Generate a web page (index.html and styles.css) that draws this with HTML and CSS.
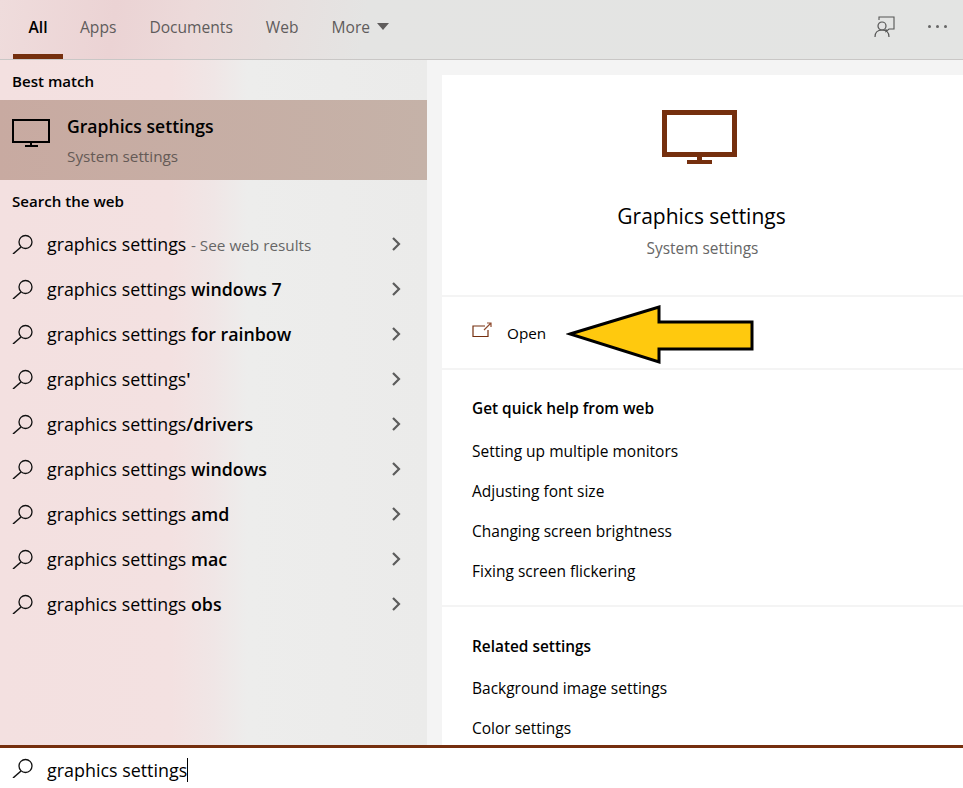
FILE: index.html
```html
<!DOCTYPE html>
<html lang="en">
<head>
    <meta charset="UTF-8">
    <title>Graphics settings</title>
    <link rel="stylesheet" href="styles.css">
</head>
<body>
    <svg class="svg-defs" width="0" height="0">
        <symbol id="icon-search" viewBox="0 0 22 20">
            <circle cx="13.5" cy="8" r="6.5" fill="none" stroke="currentColor" stroke-width="1.3"/>
            <path d="M9 13 L1 20" fill="none" stroke="currentColor" stroke-width="1.5"/>
        </symbol>
        <symbol id="icon-chevron" viewBox="0 0 10 14">
            <path d="M2 1 L8 7 L2 13" fill="none" stroke="currentColor" stroke-width="2.2"/>
        </symbol>
    </svg>

    <div class="app">
        <header class="top-bar">
            <nav class="tabs">
                <span class="tab active">All</span>
                <span class="tab">Apps</span>
                <span class="tab">Documents</span>
                <span class="tab">Web</span>
                <span class="tab">More <i class="caret"></i></span>
            </nav>
            <div class="top-actions">
                <svg class="feedback-icon" width="21" height="22" viewBox="0 0 21 22">
                    <path d="M5 4 V1 H20 V13 H15 L12 15.5 V13" fill="none" stroke="#555" stroke-width="1.1"/>
                    <circle cx="8" cy="10" r="4" fill="#e3e3e3" stroke="#555" stroke-width="1.2"/>
                    <path d="M1 21 C1 16 4 14 8 14 C12 14 15 16 15 21" fill="none" stroke="#555" stroke-width="1.2"/>
                </svg>
                <span class="dots"><i></i><i></i><i></i></span>
            </div>
        </header>

        <main class="content">
            <aside class="results">
                <h3 class="group-title">Best match</h3>
                <div class="best-match">
                    <svg class="best-icon" width="38" height="28" viewBox="0 0 38 28">
                        <path d="M1 1 H37 V23 H1 Z" fill="none" stroke="#000" stroke-width="2"/>
                        <path d="M19 24 V27 M13 27 H26" fill="none" stroke="#000" stroke-width="2"/>
                    </svg>
                    <div>
                        <div class="best-name">Graphics settings</div>
                        <div class="best-type">System settings</div>
                    </div>
                </div>
                <h3 class="group-title">Search the web</h3>
                <ul class="web-list">
                    <li><svg class="search-icon"><use href="#icon-search"/></svg><span class="query">graphics settings <small>- See web results</small></span><svg class="chevron"><use href="#icon-chevron"/></svg></li>
                    <li><svg class="search-icon"><use href="#icon-search"/></svg><span class="query">graphics settings <b>windows 7</b></span><svg class="chevron"><use href="#icon-chevron"/></svg></li>
                    <li><svg class="search-icon"><use href="#icon-search"/></svg><span class="query">graphics settings <b>for rainbow</b></span><svg class="chevron"><use href="#icon-chevron"/></svg></li>
                    <li><svg class="search-icon"><use href="#icon-search"/></svg><span class="query">graphics settings<b>'</b></span><svg class="chevron"><use href="#icon-chevron"/></svg></li>
                    <li><svg class="search-icon"><use href="#icon-search"/></svg><span class="query">graphics settings<b>/drivers</b></span><svg class="chevron"><use href="#icon-chevron"/></svg></li>
                    <li><svg class="search-icon"><use href="#icon-search"/></svg><span class="query">graphics settings <b>windows</b></span><svg class="chevron"><use href="#icon-chevron"/></svg></li>
                    <li><svg class="search-icon"><use href="#icon-search"/></svg><span class="query">graphics settings <b>amd</b></span><svg class="chevron"><use href="#icon-chevron"/></svg></li>
                    <li><svg class="search-icon"><use href="#icon-search"/></svg><span class="query">graphics settings <b>mac</b></span><svg class="chevron"><use href="#icon-chevron"/></svg></li>
                    <li><svg class="search-icon"><use href="#icon-search"/></svg><span class="query">graphics settings <b>obs</b></span><svg class="chevron"><use href="#icon-chevron"/></svg></li>
                </ul>
            </aside>

            <section class="details">
                <div class="card hero">
                    <svg class="hero-icon" width="75" height="54" viewBox="0 0 75 54">
                        <path d="M2.5 2.5 H72.5 V44.5 H2.5 Z" fill="none" stroke="#752f0e" stroke-width="5"/>
                        <path d="M35 47 H40 V50 H50 V54 H25 V50 H35 Z" fill="#752f0e"/>
                    </svg>
                    <div class="hero-name">Graphics settings</div>
                    <div class="hero-type">System settings</div>
                </div>
                <div class="card open-row">
                    <svg class="open-icon" width="20" height="16" viewBox="0 0 20 16">
                        <path d="M13 4 H1 V14.5 H16 V8" fill="none" stroke="#752f0e" stroke-width="1.2"/>
                        <path d="M12 8 L19 1 M15 1 H19 V5" fill="none" stroke="#8f4c30" stroke-width="1.2"/>
                    </svg>
                    <span>Open</span>
                </div>
                <div class="card links">
                    <h4>Get quick help from web</h4>
                    <a>Setting up multiple monitors</a>
                    <a>Adjusting font size</a>
                    <a>Changing screen brightness</a>
                    <a>Fixing screen flickering</a>
                </div>
                <div class="card links related">
                    <h4>Related settings</h4>
                    <a>Background image settings</a>
                    <a>Color settings</a>
                </div>
            </section>
        </main>

        <footer class="search-bar">
            <svg class="search-icon"><use href="#icon-search"/></svg>
            <span class="search-text">graphics settings</span>
        </footer>

        <!-- yellow arrow drawn on top of the screenshot -->
        <svg class="arrow" width="188" height="60" viewBox="0 0 188 60">
            <path d="M4 29 L93 2 V17 H186 V44 H93 V57 Z" fill="#ffc90e" stroke="#000" stroke-width="3"/>
        </svg>
    </div>
</body>
</html>
```

FILE: styles.css
```css
* {
    box-sizing: border-box;
}
body {
    margin: 0;
    font-family: "Open Sans", "Noto Sans", sans-serif;
    color: #000;
    background-color: #fff;
}
.svg-defs {
    display: block;
    height: 0;
}
.app {
    position: relative;
    width: 963px;
    height: 788px;
    overflow: hidden;
    display: flex;
    flex-direction: column;
}

/* top tabs */
.top-bar {
    flex: 0 0 60px;
    display: flex;
    justify-content: space-between;
    border-bottom: 1px solid #c9c7c6;
    background: linear-gradient(98deg, #efdcdc 0%, #ebd3d4 12%, #ecdada 20%, #e8dfde 28%, #e4e4e3 38%, #e3e4e3 100%);
}
.tabs {
    display: flex;
    padding-left: 13px;
}
.tab {
    height: 59px;
    padding: 17px 0 0;
    margin-right: 33px;
    font-size: 15.6px;
    line-height: 20px;
    color: #5f5c5c;
}
.tab.active {
    width: 50px;
    margin-right: 17px;
    text-align: center;
    font-weight: 600;
    color: #000;
    border-bottom: 5px solid #752f0e;
}
.caret {
    display: inline-block;
    margin-left: 3px;
    vertical-align: 3px;
    border-left: 6.5px solid transparent;
    border-right: 6.5px solid transparent;
    border-top: 7px solid #5f5c5c;
}
.top-actions {
    display: flex;
    align-items: flex-start;
    padding: 16px 16px 0 0;
}
.dots {
    display: flex;
    gap: 5px;
    margin: 9px 0 0 33px;
}
.dots i {
    width: 3px;
    height: 3px;
    border-radius: 50%;
    background-color: #666;
}

.content {
    flex: 1;
    display: flex;
    min-height: 0;
}

/* left results list */
.results {
    flex: 0 0 427px;
    background: linear-gradient(90deg, #f3e0e0 0%, #f3e1e1 40%, #f0e6e6 50%, #ededec 58%, #ebebea 100%);
}
.group-title {
    margin: 0;
    padding-left: 12px;
    height: 40px;
    font-size: 15.1px;
    line-height: 42px;
    font-weight: 600;
}
.best-match {
    height: 80px;
    display: flex;
    background: linear-gradient(90deg, #c8aaa1, #c5b2a8);
}
.best-icon {
    margin: 19px 17px 0 12px;
    flex: none;
}
.best-name {
    margin-top: 14px;
    font-size: 17.6px;
    line-height: 24px;
    font-weight: 600;
}
.best-type {
    margin-top: 8px;
    font-size: 15.3px;
    line-height: 20px;
    color: #655a56;
}
.web-list {
    list-style: none;
    margin: 1px 0 0;
    padding: 0;
}
.web-list li {
    height: 45px;
    display: flex;
    align-items: center;
}
.search-icon {
    width: 22px;
    height: 20px;
    margin-left: 12px;
    margin-right: 13px;
    color: #111;
    flex: none;
}
.query {
    flex: 1;
    font-size: 17.8px;
    white-space: nowrap;
}
.query b {
    font-weight: 600;
}
.query small {
    font-size: 15.3px;
    color: #666;
}
.chevron {
    width: 10px;
    height: 14px;
    margin-right: 26px;
    color: #5c5c5c;
    flex: none;
}

/* right details panel */
.details {
    flex: 1;
    display: flex;
    flex-direction: column;
    gap: 2px;
    padding: 15px 0 0 15px;
    background-color: #f4f4f4;
}
.card {
    background-color: #fff;
}
.hero {
    flex: 0 0 220px;
    display: flex;
    flex-direction: column;
    align-items: center;
    padding-top: 35px;
}
.hero-icon {
    display: block;
    margin-right: 6px;
}
.hero-name {
    margin-top: 37px;
    margin-right: 2px;
    font-size: 21px;
    line-height: 30px;
}
.hero-type {
    margin-top: 8px;
    font-size: 15.4px;
    line-height: 20px;
    color: #666;
}
.open-row {
    flex: 0 0 71px;
    display: flex;
    align-items: center;
    padding-left: 30px;
    font-size: 15.3px;
}
.open-icon {
    margin: -6px 15px 0 0;
}
.links {
    flex: 0 0 235px;
    padding: 28px 30px 0;
    font-size: 15.5px;
}
.links h4 {
    margin: 0 0 11px;
    font-size: 15.4px;
    line-height: 22px;
    font-weight: 600;
}
.links a {
    display: block;
    height: 40px;
    line-height: 40px;
}
.related {
    flex: 1;
    padding-top: 29px;
}
.related h4 {
    margin-bottom: 10px;
}

/* bottom search box */
.search-bar {
    flex: 0 0 43px;
    display: flex;
    align-items: center;
    border-top: 3px solid #752f0e;
    background-color: #fff;
}
.search-text {
    font-size: 17.9px;
    line-height: 24px;
    margin-top: 3px;
    border-right: 1px solid #000;
}

.arrow {
    position: absolute;
    left: 566px;
    top: 305px;
}
```
